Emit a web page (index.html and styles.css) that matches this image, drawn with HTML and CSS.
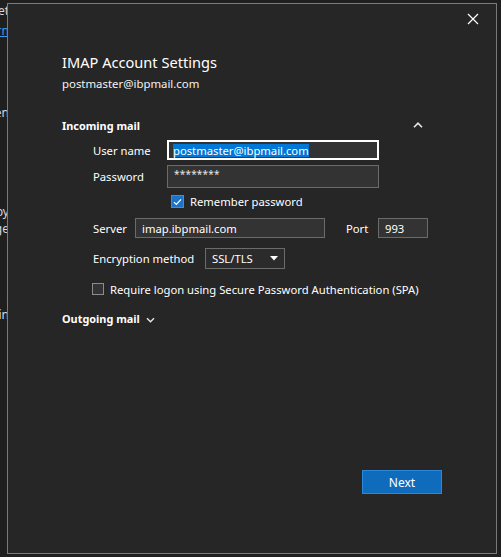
FILE: index.html
```html
<!DOCTYPE html>
<html lang="en">
<head>
<meta charset="utf-8">
<title>IMAP Account Settings</title>
<link rel="stylesheet" href="styles.css">
</head>
<body>
<div class="backdrop">
  <div class="bg-line l1">Get</div>
  <div class="bg-line l2"><span class="bg-link">Learn</span></div>
  <div class="bg-line l3">Open</div>
  <div class="bg-line l4">by</div>
  <div class="bg-line l5">Page</div>
  <div class="bg-line l6">.</div>
  <div class="bg-line l7">in</div>
</div>

<div class="dialog">
  <button class="close" aria-label="Close">
    <svg width="12" height="12" viewBox="0 0 12 12"><path d="M1 1 L11 11 M11 1 L1 11" stroke="#ffffff" stroke-width="1.2" fill="none"/></svg>
  </button>
  <div class="content">
    <h1 class="title">IMAP Account Settings</h1>
    <div class="account">postmaster@ibpmail.com</div>

    <div class="section-head open">
      <span class="section-title">Incoming mail</span>
      <svg class="chev-up" width="10" height="6" viewBox="0 0 10 6"><path d="M1 5.2 L5 1.2 L9 5.2" stroke="#e8e8e8" stroke-width="1.6" fill="none"/></svg>
    </div>

    <div class="fields">
      <div class="row r-user">
        <span class="lbl lbl-user">User name</span>
        <div class="input focus w-user"><span class="sel">postmaster@ibpmail.com</span></div>
      </div>
      <div class="row r-pass">
        <span class="lbl lbl-user">Password</span>
        <div class="input w-user pass">********</div>
      </div>
      <div class="row r-remember">
        <span class="check checked">
          <svg width="9" height="8" viewBox="0 0 9 8"><path d="M1 4.2 L3.4 6.4 L8 1.4" stroke="#ffffff" stroke-width="1.3" fill="none"/></svg>
        </span>
        <span class="check-label">Remember password</span>
      </div>
      <div class="row r-server">
        <span class="lbl lbl-server">Server</span>
        <div class="input w-server">imap.ibpmail.com</div>
        <span class="lbl lbl-port">Port</span>
        <div class="input w-port">993</div>
      </div>
      <div class="row r-enc">
        <span class="lbl lbl-enc">Encryption method</span>
        <div class="select">
          <span>SSL/TLS</span>
          <svg width="8" height="5" viewBox="0 0 8 5"><path d="M0 0 L8 0 L4 4.5 Z" fill="#ffffff"/></svg>
        </div>
      </div>
      <div class="row r-spa">
        <span class="check"></span>
        <span class="check-label">Require logon using Secure Password Authentication (SPA)</span>
      </div>
    </div>

    <div class="section-head closed">
      <span class="section-title">Outgoing mail</span>
      <svg class="chev-down" width="9" height="6" viewBox="0 0 9 6"><path d="M1 1.2 L4.5 4.7 L8 1.2" stroke="#e8e8e8" stroke-width="1.4" fill="none"/></svg>
    </div>
  </div>
  <div class="footer">
    <button class="next">Next</button>
  </div>
</div>
</body>
</html>
```

FILE: styles.css
```css
* { box-sizing: border-box; }
html, body { margin: 0; height: 100%; }
body {
  background: #1f1f1f;
  color: #ffffff;
  font-family: "Noto Sans", "Open Sans", sans-serif;
  font-size: 11.25px;
  overflow: hidden;
}

/* page behind the dialog */
.backdrop {
  width: 9px;
  color: #d8d8d8;
  font-size: 12px;
  line-height: 14px;
}
.bg-line {
  display: flex;
  justify-content: flex-end;
  overflow: hidden;
  white-space: nowrap;
}
.bg-link { color: #3a9be0; text-decoration: underline; }
.l1 { padding-top: 4px; }
.l2 { margin-top: 6px; }
.l3 { margin-top: 68px; }
.l4 { margin-top: 85px; }
.l5 { margin-top: 3px; }
.l6 { margin-top: 55px; font-size: 8px; line-height: 8px; }
.l7 { margin-top: 9px; }

/* dialog */
.dialog {
  position: absolute;
  left: 7px;
  top: 3px;
  width: 490px;
  height: 551px;
  background: #262626;
  border: 1px solid #7a7a7a;
  display: flex;
  flex-direction: column;
}
.close {
  position: absolute;
  right: 14px;
  top: 6px;
  width: 18px;
  height: 18px;
  padding: 0;
  border: 0;
  background: none;
  display: flex;
  align-items: center;
  justify-content: center;
}
.content {
  flex: 1;
  padding: 47px 73px 0 54px;
}
.title {
  margin: 0;
  font-size: 14.6px;
  font-weight: 400;
  line-height: 22px;
  color: #ffffff;
}
.account {
  margin-top: 2px;
  font-size: 11.4px;
  line-height: 18px;
  color: #f2f2f2;
}

.section-head {
  display: flex;
  align-items: center;
  font-weight: 700;
  font-size: 10.9px;
  line-height: 16px;
}
.section-head.open {
  margin-top: 25px;
  justify-content: space-between;
}
.section-head.closed {
  margin-top: 16px;
  gap: 6px;
}
.chev-up { margin-top: -2px; }
.chev-down { margin-top: 1px; }

.fields {
  padding-left: 31px;
}
.row {
  display: flex;
  align-items: center;
}
.row > * { flex-shrink: 0; }
.r-user { margin-top: 6px; height: 20px; }
.r-pass { margin-top: 5px; height: 23px; }
.r-remember { margin-top: 7px; padding-left: 78px; height: 13px; }
.r-server { margin-top: 10px; height: 20px; }
.r-enc { margin-top: 10px; height: 21px; }
.r-spa { margin-top: 14px; height: 12px; }

.lbl { color: #ffffff; white-space: nowrap; }
.lbl-user { width: 74px; }
.lbl-server { width: 42px; }
.lbl-port { width: 32px; margin-left: 21px; }
.lbl-enc { width: 112px; }

.input {
  height: 100%;
  background: #333333;
  border: 1px solid #6b6b6b;
  display: flex;
  align-items: center;
  padding: 0 6px;
  color: #ffffff;
  white-space: nowrap;
}
.w-user { width: 212px; }
.w-server { width: 190px; }
.w-port { width: 50px; }
.input.focus {
  border: 2px solid #ffffff;
  padding: 0 4px;
}
.sel {
  background: #0078d7;
  color: #ffffff;
  line-height: 13px;
}
.input.pass {
  align-items: flex-start;
  padding-top: 1px;
  font-size: 10px;
  letter-spacing: 0.2px;
  color: #e6e6e6;
}

.check {
  width: 13px;
  height: 13px;
  border: 1px solid #8c8c8c;
  background: #333333;
  display: flex;
  align-items: center;
  justify-content: center;
}
.r-spa .check { width: 12px; height: 12px; margin-left: -1px; }
.check.checked {
  background: #1a73c9;
  border-color: #3d8fe0;
}
.check-label { margin-left: 6px; white-space: nowrap; }

.select {
  width: 80px;
  height: 100%;
  border: 1px solid #6b6b6b;
  background: #2b2b2b;
  display: flex;
  align-items: center;
  justify-content: space-between;
  padding: 0 6px 0 6px;
}

.footer {
  display: flex;
  justify-content: flex-end;
  padding: 0 54px 59px 0;
}
.next {
  width: 80px;
  height: 24px;
  background: #0f6cbd;
  border: 1px solid #2b88d8;
  color: #ffffff;
  font-family: "Noto Sans", "Open Sans", sans-serif;
  font-size: 12px;
  padding: 0;
}
```
